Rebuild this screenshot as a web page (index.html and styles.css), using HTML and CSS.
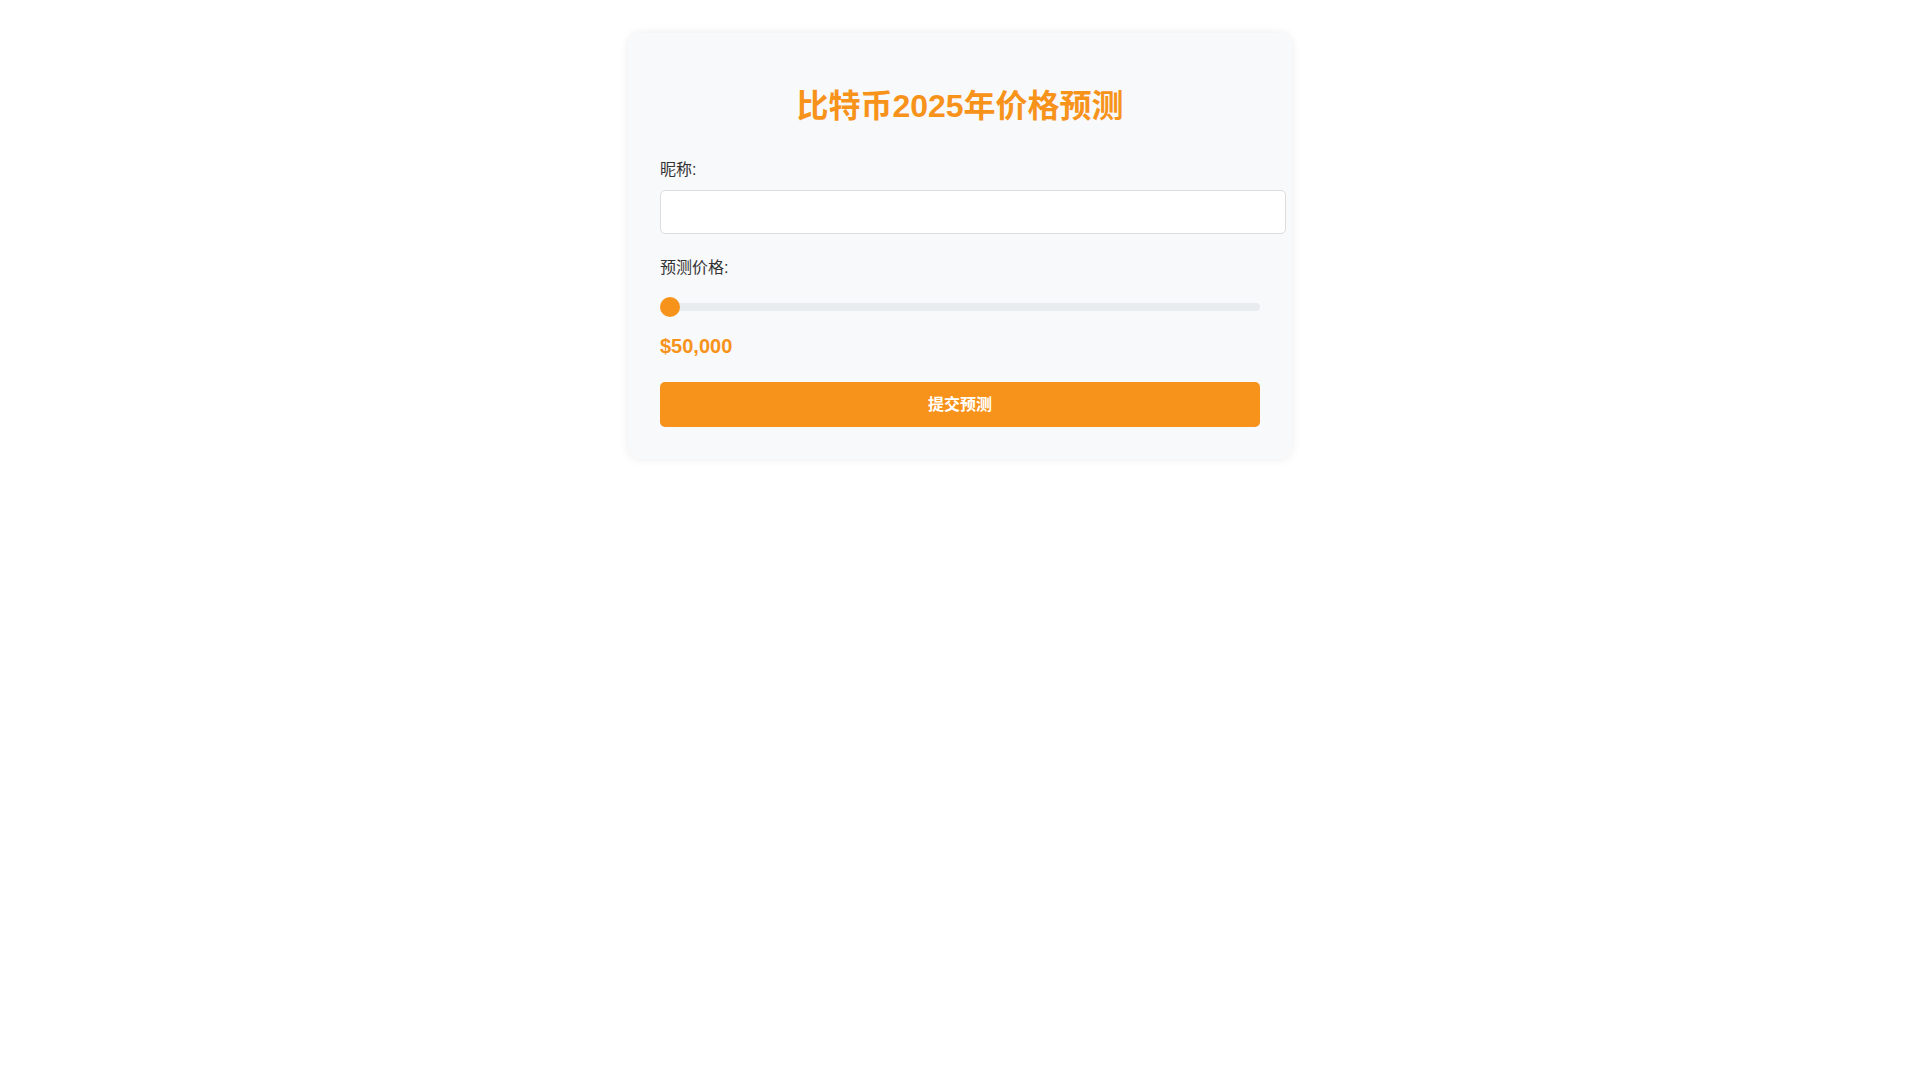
FILE: index.html
```html
<!DOCTYPE html>
<html lang="zh-CN">
<head>
  <meta charset="UTF-8">
  <meta name="viewport" content="width=device-width, initial-scale=1.0">
  <title>比特币2025年价格预测</title>
  <link rel="stylesheet" href="styles.css">
</head>
<body>

  <!-- Prediction Card -->
  <div class="container">
    <h1>比特币2025年价格预测</h1>

    <form id="predictionForm">
      <div class="form-group">
        <label for="nickname">昵称:</label>
        <input type="text" id="nickname" class="text-input">
      </div>

      <div class="form-group">
        <label for="price">预测价格:</label>
        <input type="range" id="price" class="slider" min="50000" max="500000" step="1000" value="50000">
        <div class="price-display" id="priceValue">$50,000</div>
      </div>

      <button type="submit" class="submit-btn">提交预测</button>
    </form>
  </div>

  <script>
    const slider = document.getElementById("price");
    const priceValue = document.getElementById("priceValue");

    slider.addEventListener("input", () => {
      priceValue.textContent = "$" + Number(slider.value).toLocaleString("en-US");
    });

    document.getElementById("predictionForm").addEventListener("submit", (e) => {
      e.preventDefault();
    });
  </script>
</body>
</html>
```

FILE: styles.css
```css
body {
  margin: 0;
  padding: 0 20px;
  font-family: "Liberation Sans", Arial, "Noto Sans CJK SC", sans-serif;
  background-color: #fff;
  color: #333;
}

.container {
  width: 600px;
  margin: 33px auto;
  padding: 32px;
  background-color: #f8f9fa;
  border-radius: 12px;
  box-shadow: 0 0 10px rgba(0, 0, 0, 0.08);
}

h1 {
  margin: 21px 0 32px;
  font-size: 32px;
  line-height: 40px;
  color: #f7931a;
  text-align: center;
}

.form-group {
  margin-bottom: 22px;
}

label {
  display: block;
  margin-bottom: 8px;
  font-size: 16px;
  line-height: 24px;
  color: #333;
}

.text-input {
  display: block;
  width: 100%;
  margin: 0;
  padding: 12px;
  font-family: inherit;
  font-size: 16px;
  line-height: 18px;
  border: 1px solid #ddd;
  border-radius: 5px;
  background-color: #fff;
}

/* Price slider */
.slider {
  display: block;
  -webkit-appearance: none;
  appearance: none;
  width: 100%;
  height: 8px;
  margin: 23px 0 0;
  background: #e9ecef;
  border-radius: 4px;
  outline: none;
}

.slider::-webkit-slider-thumb {
  -webkit-appearance: none;
  appearance: none;
  width: 20px;
  height: 20px;
  border-radius: 50%;
  background: #f7931a;
  cursor: pointer;
}

.slider::-moz-range-thumb {
  width: 20px;
  height: 20px;
  border: none;
  border-radius: 50%;
  background: #f7931a;
  cursor: pointer;
}

.price-display {
  margin-top: 23px;
  font-size: 20px;
  line-height: 24px;
  font-weight: bold;
  color: #f7931a;
}

.submit-btn {
  display: block;
  width: 100%;
  margin-top: 24px;
  padding: 12px;
  font-family: inherit;
  font-size: 16px;
  line-height: 21px;
  font-weight: bold;
  color: #fff;
  background-color: #f7931a;
  border: none;
  border-radius: 5px;
  cursor: pointer;
}

.submit-btn:hover {
  background-color: #e67e00;
}
```
